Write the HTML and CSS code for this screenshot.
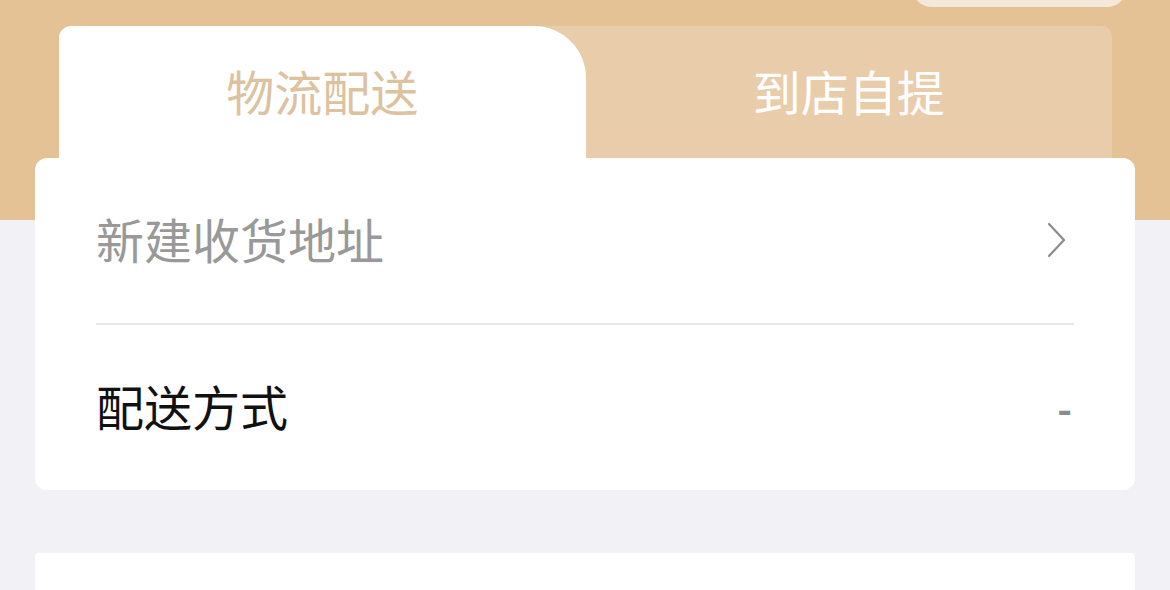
FILE: index.html
```html
<!DOCTYPE html>
<html lang="zh-CN">
<head>
    <meta charset="UTF-8">
    <meta name="viewport" content="width=device-width, initial-scale=1.0">
    <title>确认订单</title>
    <link rel="stylesheet" href="styles.css">
</head>
<body>

    <div class="page">
        <div class="topbar">
            <div class="pill"></div>
        </div>

        <div class="tabs">
            <div class="tab active">物流配送</div>
            <div class="tab">到店自提</div>
        </div>

        <div class="card">
            <div class="row">
                <span class="placeholder">新建收货地址</span>
                <svg class="arrow" width="24" height="40" viewBox="0 0 24 40">
                    <path d="M4 4 L19 20 L4 36" fill="none" stroke="#8c8c8c" stroke-width="2.2" stroke-linecap="round" stroke-linejoin="round"/>
                </svg>
            </div>
            <div class="divider"></div>
            <div class="row">
                <span class="label">配送方式</span>
                <span class="value">-</span>
            </div>
        </div>

        <div class="card next"></div>
    </div>

</body>
</html>
```

FILE: styles.css
```css
body {
    margin: 0;
    font-family: "Noto Sans CJK SC", "Noto Sans", sans-serif;
    background: #f2f2f6;
}
.page {
    height: 590px;
    background: linear-gradient(#e5c196 0, #e5c196 220px, #f2f2f6 220px);
    overflow: hidden;
}
.topbar {
    height: 7px;
    display: flex;
    justify-content: flex-end;
    padding-right: 43px;
}
.pill {
    width: 215px;
    height: 40px;
    margin-top: -33px;
    border-radius: 20px;
    background: #f4e8da;
}
/* Tabs */
.tabs {
    display: flex;
    margin: 19px 58px 0 59px;
    height: 132px;
    background: #e9cdab;
    border-radius: 12px 10px 0 0;
}
.tab {
    flex: 1;
    display: flex;
    align-items: center;
    justify-content: center;
    padding-bottom: 5px;
    font-size: 48px;
    color: #fff;
}
.tab.active {
    background: #fff;
    color: #dcc29f;
    border-radius: 12px 52px 0 0;
}
/* Card */
.card {
    margin: 0 35px;
    padding: 0 61px;
    background: #fff;
    border-radius: 12px;
}
.row {
    height: 159px;
    padding-bottom: 6px;
    display: flex;
    align-items: center;
    justify-content: space-between;
    font-size: 48px;
}
.placeholder {
    color: #999;
}
.label {
    color: #111;
}
.value {
    color: #8c8c8c;
    font-size: 40px;
    font-weight: bold;
    padding-right: 2px;
    padding-top: 4px;
}
.arrow {
    margin-right: 5px;
    margin-top: 4px;
}
.divider {
    height: 2px;
    background: #e8e8e8;
}
.next {
    margin-top: 63px;
    height: 40px;
    border-radius: 4px 4px 0 0;
}
```
